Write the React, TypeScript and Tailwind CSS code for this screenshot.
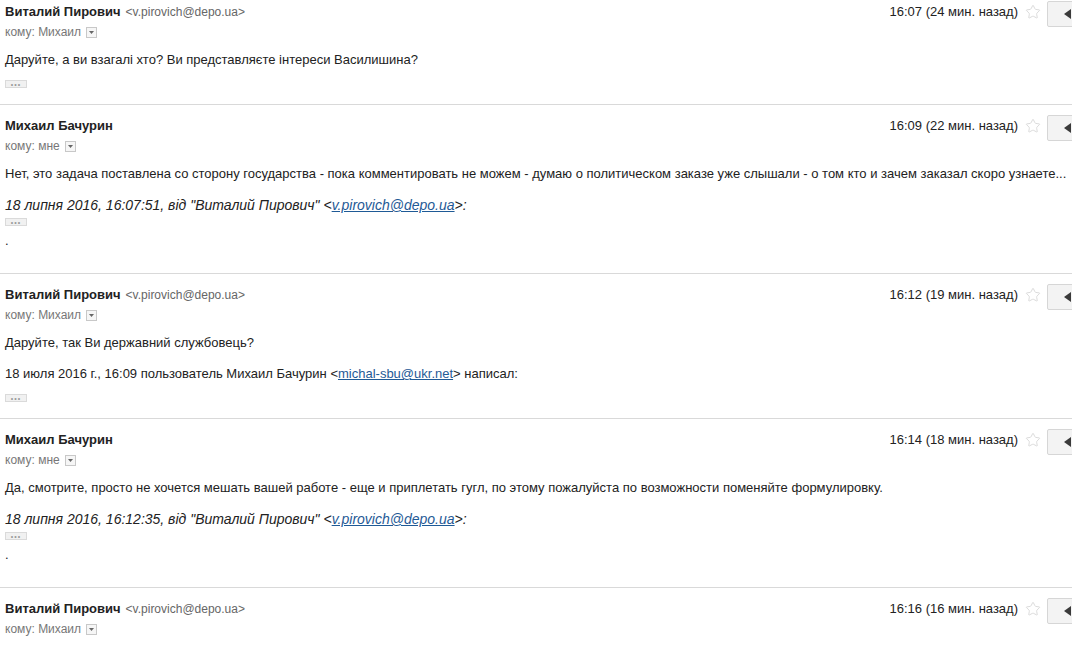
import { Star } from 'lucide-react'

type Msg = {
  name: string
  email?: string
  to: string
  time: string
  body?: string
  quote?: { italic: boolean; before: string; link: string; after: string }
  dot?: boolean
  showMore?: boolean
}

const MESSAGES: Msg[] = [
  {
    name: 'Виталий Пирович',
    email: 'v.pirovich@depo.ua',
    to: 'Михаил',
    time: '16:07 (24 мин. назад)',
    body: 'Даруйте, а ви взагалі хто? Ви представляєте інтереси Василишина?',
    showMore: true,
  },
  {
    name: 'Михаил Бачурин',
    to: 'мне',
    time: '16:09 (22 мин. назад)',
    body: 'Нет, это задача поставлена со сторону государства - пока комментировать не можем - думаю о политическом заказе уже слышали - о том кто и зачем заказал скоро узнаете...',
    quote: {
      italic: true,
      before: '18 липня 2016, 16:07:51, від "Виталий Пирович" <',
      link: 'v.pirovich@depo.ua',
      after: '>:',
    },
    showMore: true,
    dot: true,
  },
  {
    name: 'Виталий Пирович',
    email: 'v.pirovich@depo.ua',
    to: 'Михаил',
    time: '16:12 (19 мин. назад)',
    body: 'Даруйте, так Ви державний службовець?',
    quote: {
      italic: false,
      before: '18 июля 2016 г., 16:09 пользователь Михаил Бачурин <',
      link: 'michal-sbu@ukr.net',
      after: '> написал:',
    },
    showMore: true,
  },
  {
    name: 'Михаил Бачурин',
    to: 'мне',
    time: '16:14 (18 мин. назад)',
    body: 'Да, смотрите, просто не хочется мешать вашей работе - еще и приплетать гугл, по этому пожалуйста по возможности поменяйте формулировку.',
    quote: {
      italic: true,
      before: '18 липня 2016, 16:12:35, від "Виталий Пирович" <',
      link: 'v.pirovich@depo.ua',
      after: '>:',
    },
    showMore: true,
    dot: true,
  },
  {
    name: 'Виталий Пирович',
    email: 'v.pirovich@depo.ua',
    to: 'Михаил',
    time: '16:16 (16 мин. назад)',
  },
]

function ReplyButton() {
  return (
    <div className="ml-[6px] -mr-[8px] flex h-[26px] w-[33px] translate-y-[2px] items-center justify-end rounded-[2px] border border-[#d6d6d6] bg-[#f3f3f3] pr-[8px]">
      <svg width="7" height="10" viewBox="0 0 7 10">
        <path d="M7 0 L0 5 L7 10 Z" fill="#3a3a3a" />
      </svg>
    </div>
  )
}

function DropArrow() {
  return (
    <span className="ml-[5px] inline-flex h-[11px] w-[11px] items-center justify-center border border-[#c8c8c8] bg-[#f6f6f6]">
      <svg width="5" height="3" viewBox="0 0 5 3">
        <path d="M0 0 L5 0 L2.5 3 Z" fill="#666" />
      </svg>
    </span>
  )
}

function ShowMore() {
  return (
    <div className="flex h-[8px] w-[22px] items-center justify-center border border-[#dadada] bg-[#f1f1f1] text-[7px] leading-none tracking-[1px] text-[#999]">
      •••
    </div>
  )
}

function Message({ msg, first }: { msg: Msg; first: boolean }) {
  return (
    <div
      className={`border-b border-[#d9d9d9] pl-[5px] ${first ? 'pt-[2px]' : 'pt-[11px]'} ${
        msg.dot ? 'pb-[23px]' : msg.showMore ? 'pb-[16px]' : 'pb-[10px]'
      }`}
    >
      <div className="flex h-[20px] items-center">
        <span className="text-[13px] font-bold text-[#222]">{msg.name}</span>
        {msg.email && (
          <span className="ml-[5px] text-[12px] text-[#666]">&lt;{msg.email}&gt;</span>
        )}
        <div className="ml-auto flex items-center">
          <span className="text-[13px] text-[#222]">{msg.time}</span>
          <Star className="ml-[7px] h-[16px] w-[16px] text-[#d8d8d8]" strokeWidth={1.4} />
          <ReplyButton />
        </div>
      </div>
      <div className="flex h-[20px] items-center text-[12px] text-[#777]">
        кому: {msg.to}
        <DropArrow />
      </div>
      {msg.body && (
        <p className="mt-[9px] text-[13px] leading-[18px] whitespace-nowrap text-[#222]">{msg.body}</p>
      )}
      {msg.quote && (
        <p
          className={`mt-[13px] leading-[18px] text-[#222] ${
            msg.quote.italic ? 'text-[14px] italic' : 'text-[13px]'
          }`}
        >
          {msg.quote.before}
          <span className="text-[#1f5a96] underline">{msg.quote.link}</span>
          {msg.quote.after}
        </p>
      )}
      {msg.showMore && (
        <div className={msg.quote && msg.quote.italic ? 'mt-[4px]' : 'mt-[11px]'}>
          <ShowMore />
        </div>
      )}
      {msg.dot && <p className="mt-[6px] text-[13px] leading-[18px] text-[#222]">.</p>}
    </div>
  )
}

export default function App() {
  return (
    <div
      className="h-[646px] w-[1072px] overflow-hidden bg-white"
      style={{ fontFamily: '"Liberation Sans", Arial, sans-serif' }}
    >
      {MESSAGES.map((m, i) => (
        <Message key={i} msg={m} first={i === 0} />
      ))}
    </div>
  )
}
